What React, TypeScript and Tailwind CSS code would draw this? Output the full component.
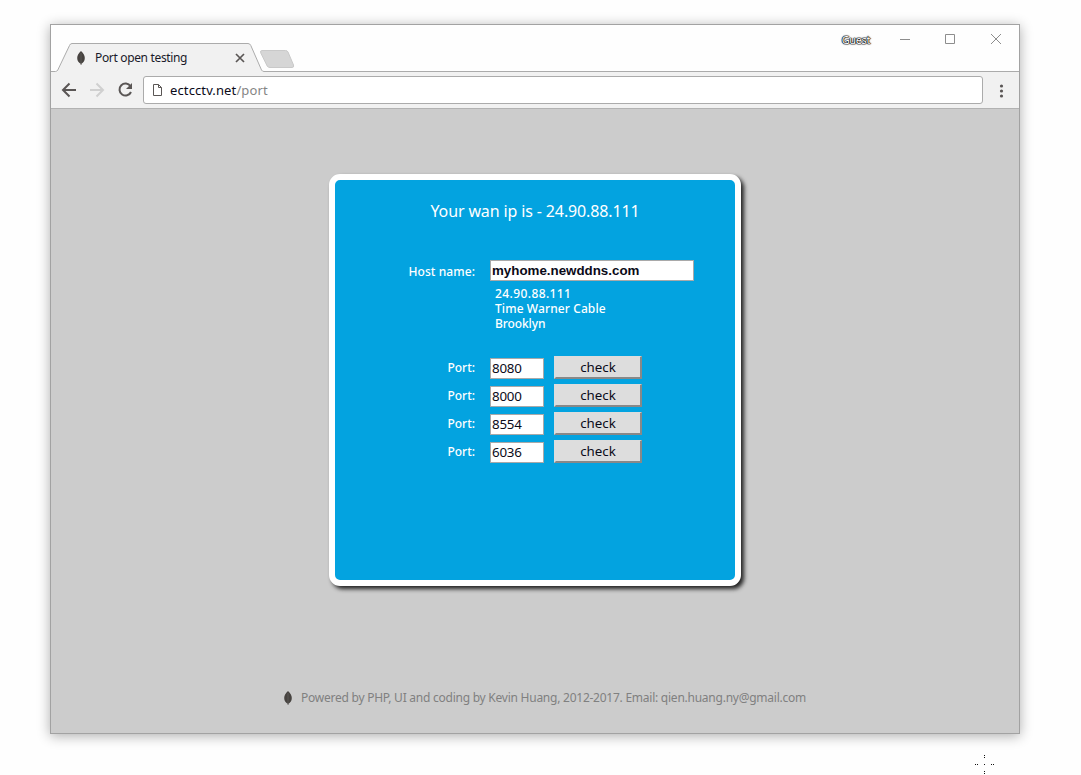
import React from "react";

const ports = ["8080", "8000", "8554", "6036"];

function Leaf({ className }: { className: string }) {
  return (
    <svg className={className} width="10" height="14" viewBox="0 0 10 14">
      <path d="M5 0C2.4 2.2 1.200 4.600 1.200 7.100C1.200 9.800 2.600 11.800 4.700 12.700V14H5.400V12.700C7.500 11.800 8.800 9.800 8.800 7.100C8.800 4.600 7.600 2.200 5 0Z" fill="#474340" />
      <path d="M5 2V13" stroke="#6a6663" strokeWidth="0.6" />
    </svg>
  );
}

function TabStrip() {
  return (
    <div className="relative flex h-[47px] shrink-0">
      <svg className="absolute top-0 left-0" width="968" height="47" fill="none">
        <path d="M6 47L18.5 20.5Q19.2 18.5 21 18.5H197Q199 18.5 199.8 20.5L211 46.5V47Z" fill="#f1f1f1" />
        <path d="M0 46.5H4.5Q6 46.5 6.8 45L18.5 20.5Q19.2 18.5 21 18.5H197Q199 18.5 199.8 20.5L210.5 45Q211.2 46.5 213 46.5H968" stroke="#ababab" />
        <path d="M211 25.500H234.500Q236.300 25.500 237 27L242.500 40Q243.300 42.500 241 42.500H219Q217 42.500 216.200 41L209.800 28Q208.800 25.500 211 25.500Z" fill="#d6d6d6" stroke="#c9c9c9" />
      </svg>
      <div className="relative mt-[18px] ml-[24px] flex h-7 w-[170px] items-center">
        <Leaf className="mt-px ml-px" />
        <span className="mt-[2px] ml-[9px] whitespace-pre font-['Noto_Sans',sans-serif] text-[12px] tracking-[-0.34px] text-[#1a1a2a]">Port open testing</span>
        <svg className="mt-[2px] ml-auto" width="10" height="10" viewBox="0 0 10 10">
          <path d="M1 1L9 9M9 1L1 9" stroke="#5a5655" strokeWidth="1.700" />
        </svg>
      </div>
      <div className="ml-auto flex h-7 items-center">
        <span className="font-['Noto_Sans',sans-serif] text-[11px] leading-none tracking-[-0.4px] text-white [text-shadow:0_0_1px_#000,0_0_1px_#000,0_0_1px_#000,0_0_1px_#000,0_0_2px_#333]">Guest</span>
        <svg className="ml-[30px]" width="102" height="12" viewBox="0 0 102 12" fill="none" stroke="#8d8d8d">
          <path d="M0 6.500H10" />
          <path d="M45.500 1.500H54.500V10.500H45.500Z" />
          <path d="M91 1L101 11M101 1L91 11" />
        </svg>
        <div className="w-[17px]" />
      </div>
    </div>
  );
}

function Toolbar() {
  return (
    <div className="flex h-[37px] shrink-0 items-center border-b border-[#b2b2b2] bg-[#f1f1f1]">
      <svg className="ml-[10px]" width="72" height="18" viewBox="0 0 72 18" fill="none" strokeWidth="2">
        <path d="M15 9H2M8.500 2.500L2 9L8.500 15.500" stroke="#5a5655" />
        <path d="M29 9H42M35.500 2.500L42 9L35.500 15.500" stroke="#d0d0d0" />
        <path d="M69.500 5.200A6 6 0 1 0 70 11" stroke="#5a5655" />
        <path d="M71 2V8H65Z" fill="#5a5655" />
      </svg>
      <div className="ml-[10px] flex h-7 w-[840px] items-center rounded-[3px] border border-[#ababab] bg-white">
        <svg className="ml-[9px]" width="9" height="12" viewBox="0 0 9 12" fill="none" stroke="#5a5655">
          <path d="M0.500 0.500H5.500L8.500 3.500V11.500H0.500ZM5.500 0.500V3.500H8.500" />
        </svg>
        <span className="mt-[2px] ml-2 font-['Noto_Sans',sans-serif] text-[13px] tracking-[0.12px] text-[#0a0a18]">
          ectcctv.net<span className="text-[#858585]">/port</span>
        </span>
      </div>
      <svg className="mt-px ml-4" width="5" height="14" viewBox="0 0 5 14" fill="#5a5655">
        <circle cx="2.500" cy="2" r="1.600" />
        <circle cx="2.500" cy="7" r="1.600" />
        <circle cx="2.500" cy="12" r="1.600" />
      </svg>
    </div>
  );
}

function PortRow({ port }: { port: string }) {
  return (
    <div className="flex h-7">
      <span className="w-[140px] pt-[3px] text-right leading-[18px]">Port:</span>
      <input
        className="mt-[2px] ml-[15px] h-[21px] w-[54px] border border-[#a9a9a9] bg-white px-px pb-[2px] font-['Noto_Sans',sans-serif] text-[13.333px] tracking-[-0.2px] font-normal text-[#0a0a18]"
        defaultValue={port}
      />
      <button className="ml-[10px] h-[23px] w-[88px] border-t border-r-2 border-b-2 border-l-2 border-t-[#ddd] border-r-[#888] border-b-[#888] border-l-[#ddd] bg-[#ddd] font-['Noto_Sans',sans-serif] text-[13.333px] leading-[19px] font-normal text-[#0a0a18]">
        check
      </button>
    </div>
  );
}

export default function App() {
  return (
    <div className="relative h-[775px] w-[1081px] overflow-hidden bg-[#fefefe] pt-6 pl-[50px]">
      <div className="flex h-[710px] w-[970px] flex-col border border-[#a2a2a2] bg-[#fefefe] shadow-[0_2px_12px_rgba(0,0,0,0.32)]">
        <TabStrip />
        <Toolbar />
        <main className="flex flex-1 flex-col items-center bg-[#ccc] pt-[65px] font-['Noto_Sans',sans-serif]">
          <section className="h-[412px] w-[412px] shrink-0 rounded-[11px] border-[6px] border-white bg-[#03a3e0] text-[12px] font-medium text-white shadow-[3px_3px_4px_#222]">
            <h1 className="mt-[19px] text-center text-[16px] leading-6 font-normal tracking-[-0.13px]">Your wan ip is - 24.90.88.111</h1>
            <div className="mt-[37px] flex">
              <span className="w-[140px] pt-[3px] text-right leading-[18px] tracking-[0.08px]">Host name:</span>
              <div className="ml-[15px]">
                <input
                  className="block h-[21px] w-[204px] border border-[#a9a9a9] bg-white px-px font-['Liberation_Sans',sans-serif] text-[13.333px] font-bold text-[#0a0a18]"
                  defaultValue="myhome.newddns.com"
                />
                <div className="mt-[5px] ml-[5px] leading-[15px]">
                  <div className="tracking-[0.4px]">24.90.88.111</div>
                  <div className="tracking-[0.1px]">Time Warner Cable</div>
                  <div className="tracking-[-0.1px]">Brooklyn</div>
                </div>
              </div>
            </div>
            <div className="mt-[25px]">
              {ports.map((port) => (
                <PortRow key={port} port={port} />
              ))}
            </div>
          </section>
          <footer className="mt-[103px] flex items-center pl-[19px] text-[12px] leading-[18px] text-[#808080]">
            <Leaf className="mr-2" />
            <span className="whitespace-nowrap tracking-[-0.245px]">Powered by PHP, UI and coding by Kevin Huang, 2012-2017. Email: qien.huang.ny@gmail.com</span>
          </footer>
        </main>
      </div>
      <svg className="absolute top-[754px] left-[974px]" width="21" height="21" fill="#111">
        <path d="M10 1h1v1h-1zM10 3h1v1h-1zM10 10h1v1h-1zM10 17h1v1h-1zM10 19h1v1h-1zM1 10h1v1h-1zM3 10h1v1h-1zM17 10h1v1h-1zM19 10h1v1h-1z" />
      </svg>
    </div>
  );
}
